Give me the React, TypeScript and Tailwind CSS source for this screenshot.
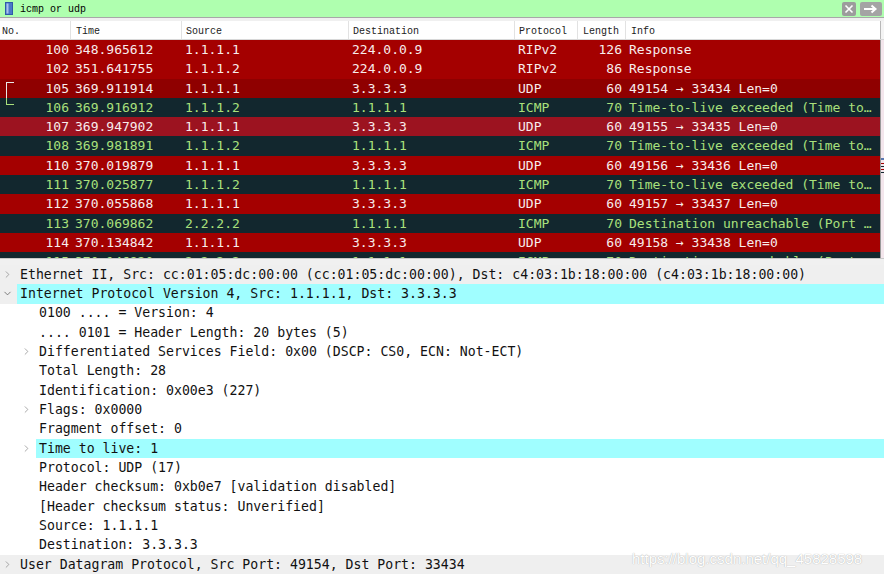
import React from 'react';
import { ChevronRight, ChevronDown } from 'lucide-react';

type Packet = {
  no: number;
  time: string;
  src: string;
  dst: string;
  proto: string;
  len: number;
  info: string;
  kind: 'udp' | 'icmp' | 'sel' | 'hover';
};

const packets: Packet[] = [
  { no: 100, time: '348.965612', src: '1.1.1.1', dst: '224.0.0.9', proto: 'RIPv2', len: 126, info: 'Response', kind: 'udp' },
  { no: 102, time: '351.641755', src: '1.1.1.2', dst: '224.0.0.9', proto: 'RIPv2', len: 86, info: 'Response', kind: 'udp' },
  { no: 105, time: '369.911914', src: '1.1.1.1', dst: '3.3.3.3', proto: 'UDP', len: 60, info: '49154 → 33434 Len=0', kind: 'sel' },
  { no: 106, time: '369.916912', src: '1.1.1.2', dst: '1.1.1.1', proto: 'ICMP', len: 70, info: 'Time-to-live exceeded (Time to…', kind: 'icmp' },
  { no: 107, time: '369.947902', src: '1.1.1.1', dst: '3.3.3.3', proto: 'UDP', len: 60, info: '49155 → 33435 Len=0', kind: 'hover' },
  { no: 108, time: '369.981891', src: '1.1.1.2', dst: '1.1.1.1', proto: 'ICMP', len: 70, info: 'Time-to-live exceeded (Time to…', kind: 'icmp' },
  { no: 110, time: '370.019879', src: '1.1.1.1', dst: '3.3.3.3', proto: 'UDP', len: 60, info: '49156 → 33436 Len=0', kind: 'udp' },
  { no: 111, time: '370.025877', src: '1.1.1.2', dst: '1.1.1.1', proto: 'ICMP', len: 70, info: 'Time-to-live exceeded (Time to…', kind: 'icmp' },
  { no: 112, time: '370.055868', src: '1.1.1.1', dst: '3.3.3.3', proto: 'UDP', len: 60, info: '49157 → 33437 Len=0', kind: 'udp' },
  { no: 113, time: '370.069862', src: '2.2.2.2', dst: '1.1.1.1', proto: 'ICMP', len: 70, info: 'Destination unreachable (Port …', kind: 'icmp' },
  { no: 114, time: '370.134842', src: '1.1.1.1', dst: '3.3.3.3', proto: 'UDP', len: 60, info: '49158 → 33438 Len=0', kind: 'udp' },
  { no: 115, time: '370.146820', src: '2.2.2.2', dst: '1.1.1.1', proto: 'ICMP', len: 70, info: 'Destination unreachable (Port …', kind: 'icmp' },
];

const rowStyle = {
  udp: 'bg-[#a40000] text-[#f8ecec]',
  sel: 'bg-[#8f0000] text-[#f8ecec]',
  hover: 'bg-[#9c1320] text-[#f8ecec]',
  icmp: 'bg-[#12272e] text-[#a9e07c]',
};

type Detail = {
  text: string;
  level: 0 | 1;
  exp?: 'open' | 'closed';
  hl?: boolean;
};

const details: Detail[] = [
  { text: 'Ethernet II, Src: cc:01:05:dc:00:00 (cc:01:05:dc:00:00), Dst: c4:03:1b:18:00:00 (c4:03:1b:18:00:00)', level: 0, exp: 'closed' },
  { text: 'Internet Protocol Version 4, Src: 1.1.1.1, Dst: 3.3.3.3', level: 0, exp: 'open', hl: true },
  { text: '0100 .... = Version: 4', level: 1 },
  { text: '.... 0101 = Header Length: 20 bytes (5)', level: 1 },
  { text: 'Differentiated Services Field: 0x00 (DSCP: CS0, ECN: Not-ECT)', level: 1, exp: 'closed' },
  { text: 'Total Length: 28', level: 1 },
  { text: 'Identification: 0x00e3 (227)', level: 1 },
  { text: 'Flags: 0x0000', level: 1, exp: 'closed' },
  { text: 'Fragment offset: 0', level: 1 },
  { text: 'Time to live: 1', level: 1, exp: 'closed', hl: true },
  { text: 'Protocol: UDP (17)', level: 1 },
  { text: 'Header checksum: 0xb0e7 [validation disabled]', level: 1 },
  { text: '[Header checksum status: Unverified]', level: 1 },
  { text: 'Source: 1.1.1.1', level: 1 },
  { text: 'Destination: 3.3.3.3', level: 1 },
  { text: 'User Datagram Protocol, Src Port: 49154, Dst Port: 33434', level: 0, exp: 'closed' },
];

const FilterBar = () => (
  <div className="flex items-center h-[18px] bg-[#afffaf] border-b border-[#a8a8a8]">
    <div className="w-[18px] flex justify-center">
      <svg width="8" height="13" viewBox="0 0 8 13">
        <rect x="0.5" y="0.5" width="7" height="12" fill="#4a78c8" stroke="#2f5aa8" />
        <rect x="1.5" y="1.5" width="2" height="10" fill="#a9c3ee" />
      </svg>
    </div>
    <span className="ml-[2px] pt-[3px] text-[10px] leading-none text-black font-['Liberation_Mono',monospace]">icmp or udp</span>
    <div className="ml-auto flex items-center gap-[4px] pr-[2px]">
      <div className="w-[14px] h-[14px] bg-[#9c9c9c] rounded-[2px] flex items-center justify-center">
        <svg width="10" height="10" viewBox="0 0 10 10">
          <path d="M1.5 1.5 L8.5 8.5 M8.5 1.5 L1.5 8.5" stroke="#fff" strokeWidth="1.6" />
        </svg>
      </div>
      <div className="w-[22px] h-[14px] bg-[#a4a4a4] rounded-[2px] flex items-center justify-center">
        <svg width="16" height="10" viewBox="0 0 16 10">
          <path d="M1 5 H12 M8.5 1.5 L12.5 5 L8.5 8.5" stroke="#fff" strokeWidth="2" fill="none" />
        </svg>
      </div>
    </div>
  </div>
);

const cols = 'grid grid-cols-[70px_111px_167px_166px_63px_48px_1fr]';
const hcell = 'border-l border-[#e2e2e2] h-full flex items-center pt-[3px]';

const Header = () => (
  <div className="flex h-[19px] bg-white border-b border-[#d8d8d8] text-[10px] text-[#222] font-['Liberation_Mono',monospace]">
    <div className={`${cols} flex-1 items-center`}>
      <div className="pl-[2px] h-full flex items-center pt-[3px]">No.</div>
      <div className={`pl-[5px] ${hcell}`}>Time</div>
      <div className={`pl-[4px] ${hcell}`}>Source</div>
      <div className={`pl-[4px] ${hcell}`}>Destination</div>
      <div className={`pl-[4px] ${hcell}`}>Protocol</div>
      <div className={`pl-[5px] ${hcell}`}>Length</div>
      <div className={`pl-[5px] ${hcell}`}>Info</div>
    </div>
    <div className="w-[4px] border-l border-[#b8b8b8] bg-[#f4f4f4]" />
  </div>
);

const PacketRow = ({ p }: { p: Packet }) => (
  <div className={`${cols} relative h-[19.3px] leading-[19.3px] whitespace-nowrap ${rowStyle[p.kind]}`}>
    {p.no === 105 && (
      <span className="absolute left-[6px] top-[3px] w-[8px] h-[17px] border-l border-t border-[#e8e8e8]" />
    )}
    {p.no === 106 && (
      <span className="absolute left-[6px] top-0 w-[8px] h-[7px] border-l border-b border-[#a9e07c]" />
    )}
    <div className="text-right pr-[1px]">{p.no}</div>
    <div className="pl-[5px]">{p.time}</div>
    <div className="pl-[4px]">{p.src}</div>
    <div className="pl-[4px]">{p.dst}</div>
    <div className="pl-[4px]">{p.proto}</div>
    <div className="text-right pr-[3px]">{p.len}</div>
    <div className="pl-[4px] overflow-hidden">{p.info}</div>
  </div>
);

const PacketList = () => (
  <div className="flex h-[218px] overflow-hidden text-[13px] font-['DejaVu_Sans_Mono',monospace]">
    <div className="flex-1 flex flex-col">
      {packets.map((p) => (
        <PacketRow key={p.no} p={p} />
      ))}
    </div>
    <div className="w-[4px] border-l border-[#9a9a9a] bg-[#f3e6ec] flex flex-col">
      <div className="h-[58px]" />
      <div className="h-[2px] bg-[#5a78b0] mt-[60px]" />
      <div className="h-[1px] bg-[#a40000] mt-[3px]" />
      <div className="h-[1px] bg-[#12272e] mt-[2px]" />
      <div className="h-[1px] bg-[#a40000] mt-[2px]" />
      <div className="h-[1px] bg-[#12272e] mt-[2px]" />
    </div>
  </div>
);

const DetailRow = ({ d }: { d: Detail }) => {
  const top = d.level === 0;
  return (
    <div className={`flex items-center h-[19.33px] whitespace-nowrap ${top ? 'bg-[#efefef]' : 'bg-white'}`}>
      <div className={`${top ? 'w-[17px] pl-[2px]' : 'w-[36px] pl-[21px]'} flex items-center shrink-0`}>
        {d.exp === 'closed' && <ChevronRight size={11} strokeWidth={1.6} color="#8a8a8a" />}
        {d.exp === 'open' && <ChevronDown size={11} strokeWidth={1.6} color="#555" />}
      </div>
      <div className={`flex-1 h-full flex items-center pl-[3px] ${d.hl ? 'bg-[#a0feff]' : ''}`}>
        <span className="text-[13.2px] text-[#111] font-['DejaVu_Sans_Mono',monospace]">{d.text}</span>
      </div>
    </div>
  );
};

export default function App() {
  return (
    <div className="relative w-[884px] h-[576px] overflow-hidden bg-white">
      <FilterBar />
      <div className="h-[3px] bg-[#f0f0f0]" />
      <Header />
      <PacketList />
      <div className="h-[7px] bg-[#f0f0f0] border-t border-[#c8c8c8]" />
      <div className="flex flex-col">
        {details.map((d, i) => (
          <DetailRow key={i} d={d} />
        ))}
      </div>
      <div className="absolute left-[632px] top-[548px] text-[15px] text-white font-['Liberation_Sans',sans-serif] [text-shadow:0_0_1px_#9a9a9a]">
        https://blog.csdn.net/qq_45828598
      </div>
    </div>
  );
}
